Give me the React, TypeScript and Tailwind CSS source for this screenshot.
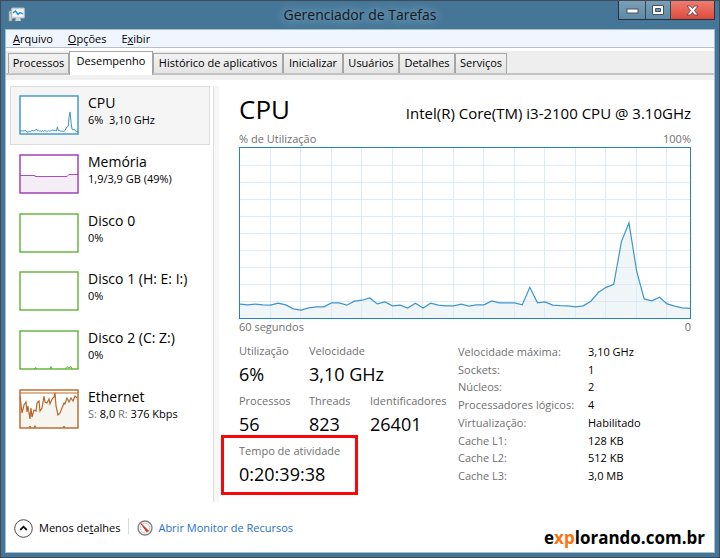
import type { ReactNode } from 'react'

// One sample per second, in chart units above the baseline
const CHART_W = 452
const CHART_H = 172
const samples = [
  14, 13.3, 14, 13.3, 13, 15, 13.3, 9.3, 8, 10.3, 11.3, 11.3, 15.3, 15.3, 13, 17, 18, 20.3, 14.3, 16.3,
  12.3, 13, 10, 15, 10, 15, 13, 12.3, 12.3, 14, 12, 13.3, 13.3, 17.3, 15.3, 15.3, 15.3, 13.3, 31, 15.3,
  16.3, 13, 12.5, 12.3, 11.3, 12.3, 17, 26, 31, 34, 77.3, 96.3, 47.3, 19.3, 17.3, 21, 14.3, 12, 10.3, 9.7,
]

function toPoints(width: number, height: number, scale = 1) {
  return samples
    .map((v, i) => `${((i * width) / (samples.length - 1)).toFixed(1)},${(height - v * scale).toFixed(1)}`)
    .join(' ')
}

function UsageChart() {
  const line = toPoints(CHART_W, CHART_H)
  return (
    <div className="h-[172px] border border-[#2484bd]">
      <svg
        className="block h-full w-full"
        viewBox={`0 0 ${CHART_W} ${CHART_H}`}
        preserveAspectRatio="none"
        role="img"
        aria-label="% de Utilização"
      >
        <polygon points={`0,${CHART_H} ${line} ${CHART_W},${CHART_H}`} fill="#f0f6f8" />
        <g stroke="#dcebf5" strokeWidth="1" shapeRendering="crispEdges">
          {[...Array(14)].map((_, i) => (
            <line key={i} x1={(i + 1) * 30.6} x2={(i + 1) * 30.6} y1="0" y2={CHART_H} />
          ))}
          {[...Array(9)].map((_, i) => (
            <line key={i} x1="0" x2={CHART_W} y1={(i + 1) * 17.2} y2={(i + 1) * 17.2} />
          ))}
        </g>
        <polyline points={line} fill="none" stroke="#3f95cb" strokeWidth="1.2" />
      </svg>
    </div>
  )
}

function Thumb({ color, children }: { color: string; children?: ReactNode }) {
  return (
    <svg width="60" height="40" viewBox="0 0 60 40" className="shrink-0" aria-hidden="true">
      <rect x="1" y="1" width="58" height="38" fill="#fff" />
      {children}
      <rect x="1" y="1" width="58" height="38" fill="none" stroke={color} strokeWidth="1.4" />
    </svg>
  )
}

const devices = [
  {
    name: 'CPU',
    detail: '6%  3,10 GHz',
    thumb: (
      <Thumb color="#3b94c9">
        <polyline
          points={toPoints(58, 39, 0.23)}
          transform="translate(1 0)"
          fill="none"
          stroke="#3b94c9"
          strokeWidth="1"
        />
      </Thumb>
    ),
  },
  {
    name: 'Memória',
    detail: '1,9/3,9 GB (49%)',
    thumb: (
      <Thumb color="#9b35b5">
        <path d="M2 21.5H16V22.5H48L50 20.5H58V39H2Z" fill="#f5edf6" />
        <path d="M1 21.5H16V22.5H48L50 20.5H59" fill="none" stroke="#a84fc0" />
      </Thumb>
    ),
  },
  { name: 'Disco 0', detail: '0%', thumb: <Thumb color="#5fb336" /> },
  { name: 'Disco 1 (H: E: I:)', detail: '0%', thumb: <Thumb color="#5fb336" /> },
  {
    name: 'Disco 2 (C: Z:)',
    detail: '0%',
    thumb: (
      <Thumb color="#5fb336">
        <path d="M15 39L17 37.5L18 39M31 39L32 36.5L33 39M46 39L48 36.5L50 38L52 36.5L53 39" fill="none" stroke="#5fb336" />
      </Thumb>
    ),
  },
  {
    name: 'Ethernet',
    detail: (
      <>
        <span className="text-[#707070]">S:</span> 8,0 <span className="text-[#707070]">R:</span> 376 Kbps
      </>
    ),
    thumb: (
      <Thumb color="#b8672a">
        <path d="M1 7L3 24L5 16L7 13L8 23L9 17L11 30L12 19L13 28L15 21L17 22L18 14L20 12L21 22L23 19L25 7L26 13L28 14L30 10L31 15L33 10L35 8L36 6L37 17L39 26L41 24L43 19L45 14L46 15L48 9L50 13L52 9L54 12L56 7L59 9V39H1Z" fill="#f7f5ef" />
        <path d="M1 4H59" stroke="#dcb591" strokeWidth="2" />
        <path
          d="M1 7L3 24L5 16L7 13L8 23L9 17L11 30L12 19L13 28L15 21L17 22L18 14L20 12L21 22L23 19L25 7L26 13L28 14L30 10L31 15L33 10L35 8L36 4L37 17L39 26L41 24L43 19L45 14L46 15L48 9L50 13L52 9L54 12L56 7L58 9"
          fill="none"
          stroke="#b8672a"
          strokeWidth="1.2"
        />
        <path d="M10 39L11 37L12 39M15 39L16 36.5L17 39M44 39L45 37L46 39" fill="none" stroke="#b8672a" />
      </Thumb>
    ),
  },
]

const tabs = [
  { label: 'Processos', width: 'w-[61px]' },
  { label: 'Desempenho', width: 'w-[84px]' },
  { label: 'Histórico de aplicativos', width: 'w-[130px]' },
  { label: 'Inicializar', width: 'w-[60px]' },
  { label: 'Usuários', width: 'w-[56px]' },
  { label: 'Detalhes', width: 'w-[56px]' },
  { label: 'Serviços', width: 'w-[52px]' },
]

const specs = [
  ['Velocidade máxima:', '3,10 GHz'],
  ['Sockets:', '1'],
  ['Núcleos:', '2'],
  ['Processadores lógicos:', '4'],
  ['Virtualização:', 'Habilitado'],
  ['Cache L1:', '128 KB'],
  ['Cache L2:', '512 KB'],
  ['Cache L3:', '3,0 MB'],
]

function Stat({ label, value }: { label: string; value: string }) {
  return (
    <div className="h-[50px] whitespace-nowrap">
      <dt className="text-[11px] leading-4 text-[#707070]">{label}</dt>
      <dd className="text-[18px] leading-[30px]">{value}</dd>
    </div>
  )
}

function TitleBar() {
  return (
    <header className="grid h-7 grid-cols-[1fr_auto_1fr] items-start">
      <svg width="18" height="16" viewBox="0 0 18 16" className="mt-1.5 ml-[3px]" aria-hidden="true">
        <path d="M1 4H4V14H1Z" fill="#d5d5d0" stroke="#8b9499" strokeWidth=".7" />
        <path d="M2 6H3" stroke="#4fae45" />
        <rect x="3.5" y="1" width="13" height="10" rx=".8" fill="#dfe5e8" stroke="#aeb6ba" />
        <rect x="5" y="2.5" width="10" height="7" fill="#eef8ff" />
        <path d="M5 6L7.5 4L10 7.5L12 5.5L15 7" fill="none" stroke="#2383cf" strokeWidth="1.3" />
        <path d="M8 11H12L13 14H7Z" fill="#d0d3d2" />
      </svg>
      <h1 className="pt-1 text-[14px] leading-5 text-[#14181c] [text-shadow:0_0_8px_#8fb4cc,0_0_14px_#8fb4cc]">
        Gerenciador de Tarefas
      </h1>
      <div className="flex h-[19px] justify-self-end border border-t-0 border-[#26313b]">
        <button aria-label="Minimizar" className="flex w-[27px] items-center justify-center border-r border-[#33475a] bg-linear-to-b from-[#7d9db3] to-[#5d8aa8]">
          <svg width="13" height="8" viewBox="0 0 13 8">
            <rect x="1" y="3" width="11" height="4" fill="#fff" stroke="#46525e" />
          </svg>
        </button>
        <button aria-label="Maximizar" className="flex w-[25px] items-center justify-center border-r border-[#33475a] bg-linear-to-b from-[#7d9db3] to-[#5d8aa8]">
          <svg width="12" height="10" viewBox="0 0 12 10">
            <path fillRule="evenodd" d="M.5.5H11.5V9.5H.5ZM3.5 3.5V6.5H8.5V3.5Z" fill="#fff" stroke="#46525e" />
          </svg>
        </button>
        <button aria-label="Fechar" className="flex w-[43px] items-center justify-center bg-linear-to-b from-[#f07b70] to-[#dd4a3b]">
          <svg width="13" height="11" viewBox="0 0 13 11">
            <path d="M1 1H4.5L6.5 3.5L8.5 1H12L8.5 5.5L12 10H8.5L6.5 7.5L4.5 10H1L4.5 5.5Z" fill="#fff" stroke="#5d4448" strokeWidth=".9" />
          </svg>
        </button>
      </div>
    </header>
  )
}

export default function App() {
  return (
    <div className="relative flex min-h-screen flex-col border border-[#3f4b56] bg-[#457597] px-1 pb-1 font-['Open_Sans','Noto_Sans',sans-serif] text-[11px] text-black">
      <TitleBar />

      <div className="flex flex-1 flex-col border border-[#a3bfd0] bg-white">
        <nav className="box-content flex h-[17px] items-center gap-[15px] border-b border-[#b4bfca] bg-[#eff6ff] px-[7px] leading-4">
          <button><u>A</u>rquivo</button>
          <button><u>O</u>pções</button>
          <button>E<u>x</u>ibir</button>
        </nav>

        <div role="tablist" className="mt-[3px] flex h-6 items-end border-b-2 border-[#c3c3c3] bg-[#eeeeee] pl-[2px]">
          {tabs.map(({ label, width }, i) =>
            i === 1 ? (
              <button key={label} role="tab" aria-selected="true" className={`${width} -mb-[2px] h-6 shrink-0 border border-b-0 border-[#a5a5a5] bg-white pb-1 whitespace-nowrap`}>
                {label}
              </button>
            ) : (
              <button key={label} role="tab" aria-selected="false" className={`${width} h-5 shrink-0 border border-b-0 border-[#a5a5a5] bg-linear-to-b from-[#f3f3f3] to-[#e4e4e4] whitespace-nowrap`}>
                {label}
              </button>
            )
          )}
        </div>
        <div className="h-[5px] bg-[#f0f0f0]" />

        <div className="mt-[6px] flex flex-1">
          <aside className="w-[207px] shrink-0 pl-1">
            <ul className="grid h-[353px] w-[200px] grid-rows-6">
              {devices.map((device, i) => (
                <li key={device.name} className="flex">
                  <button className={`flex w-full items-start gap-[9px] border pt-2 pl-2 text-left ${i === 0 ? 'border-[#dcdcdc] bg-[#f5f5f5]' : 'border-transparent'}`}>
                    {device.thumb}
                    <span>
                      <span className="block text-[14px] leading-4">{device.name}</span>
                      <span className="block leading-[17px] whitespace-pre">{device.detail}</span>
                    </span>
                  </button>
                </li>
              ))}
            </ul>
          </aside>
          <div className="mb-4 w-[6px] shrink-0 border-l border-[#dedede] bg-[#f7f7f7]" />

          <main className="min-w-0 flex-1 pr-[23px] pl-5">
            <div className="flex h-[45px] items-baseline justify-between">
              <h2 className="text-[26px] leading-[46px]">CPU</h2>
              <p className="text-[15px]">Intel(R) Core(TM) i3-2100 CPU @ 3.10GHz</p>
            </div>
            <div className="flex justify-between leading-4 text-[#707070]">
              <span>% de Utilização</span>
              <span>100%</span>
            </div>
            <UsageChart />
            <div className="flex justify-between leading-4 text-[#707070]">
              <span>60 segundos</span>
              <span>0</span>
            </div>

            <div className="mt-2 flex">
              <dl className="grid w-[219px] shrink-0 grid-cols-[70px_61px_1fr] content-start">
                <Stat label="Utilização" value="6%" />
                <div className="col-span-2">
                  <Stat label="Velocidade" value="3,10 GHz" />
                </div>
                <Stat label="Processos" value="56" />
                <Stat label="Threads" value="823" />
                <Stat label="Identificadores" value="26401" />
                <div className="relative col-span-3">
                  <Stat label="Tempo de atividade" value="0:20:39:38" />
                  <div className="pointer-events-none absolute -top-2 -left-[18px] h-[60px] w-[137px] border-[3px] border-[#f90606]" />
                </div>
              </dl>
              <table className="h-[142px] self-start leading-4">
                <tbody>
                  {specs.map(([label, value]) => (
                    <tr key={label}>
                      <th scope="row" className="w-[130px] p-0 text-left font-normal whitespace-nowrap text-[#707070]">{label}</th>
                      <td className="p-0 whitespace-nowrap">{value}</td>
                    </tr>
                  ))}
                </tbody>
              </table>
            </div>
          </main>
        </div>

        <footer className="flex h-[34px] items-start pl-2">
          <button className="flex h-5 items-center gap-[6px]">
            <svg width="19" height="19" viewBox="0 0 19 19" aria-hidden="true">
              <circle cx="9.5" cy="9.5" r="8.8" fill="#fff" stroke="#4a4a4a" />
              <path d="M6.2 11L9.5 7.7L12.8 11" fill="none" stroke="#111" strokeWidth="1.8" />
            </svg>
            <span>Menos de<u>t</u>alhes</span>
          </button>
          <div className="mx-2 h-4 border-l border-[#d5dae3]" />
          <a href="#" className="flex h-5 items-center gap-[5px] text-[#1f70cf]">
            <svg width="16" height="16" viewBox="0 0 16 16" aria-hidden="true">
              <circle cx="8" cy="8" r="7" fill="#f2f2f2" stroke="#858585" strokeWidth="1.4" />
              <circle cx="8" cy="8" r="4.8" fill="#fff" stroke="#b9b9b9" strokeDasharray="1.5 1" />
              <path d="M4 3.5L11.5 11L9.5 11.5Z" fill="#d9301c" stroke="#d9301c" />
            </svg>
            Abrir Monitor de Recursos
          </a>
        </footer>
      </div>

      <div className="absolute right-[14px] bottom-[7px] text-[17px] leading-6 font-bold">
        e<span className="text-[#ff7010]">xp</span>lorando.com.br
      </div>
    </div>
  )
}
